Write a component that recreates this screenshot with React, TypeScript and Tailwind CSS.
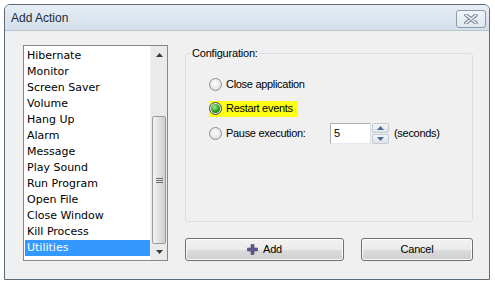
import React from 'react';

const items = [
  'Hibernate',
  'Monitor',
  'Screen Saver',
  'Volume',
  'Hang Up',
  'Alarm',
  'Message',
  'Play Sound',
  'Run Program',
  'Open File',
  'Close Window',
  'Kill Process',
  'Utilities',
];

const Radio: React.FC<{ checked?: boolean }> = ({ checked }) =>
  checked ? (
    <span className="w-[13px] h-[13px] shrink-0 rounded-full border border-[#3c4a3a] bg-[#e8e8e8] flex items-center justify-center">
      <span className="w-[9px] h-[9px] rounded-full bg-[radial-gradient(circle_at_40%_35%,#a6f08c,#2a9a1c_55%,#0d4f08)]" />
    </span>
  ) : (
    <span className="w-[13px] h-[13px] shrink-0 rounded-full border border-[#8e8f8f] bg-[radial-gradient(circle_at_45%_40%,#ffffff,#e6e6e6_60%,#c9c9c9)]" />
  );

const Button: React.FC<{ className?: string; children: React.ReactNode }> = ({ className, children }) => (
  <button
    className={`h-[23px] rounded-[3px] border border-[#707070] bg-[linear-gradient(#f2f2f2,#ebebeb_50%,#dddddd_50%,#cfcfcf)] shadow-[inset_0_0_0_1px_#fcfcfc] flex items-center justify-center text-[11px] tracking-[-0.2px] text-black ${className}`}
  >
    {children}
  </button>
);

const App: React.FC = () => {
  return (
    <div className="w-[495px] h-[285px] bg-white pl-[4px] pt-[4px] font-['Liberation_Sans',Arial,sans-serif]">
      <div className="w-[486px] h-[276px] border border-[#5d6a78] rounded-t-[6px] flex flex-col overflow-hidden">
        {/* title bar */}
        <div className="h-[25px] bg-[linear-gradient(#e6edf5,#d4dfeb)] flex items-center justify-between pl-[6px] pr-[3px]">
          <span className="text-[12px] text-[#1b2a3a]">Add Action</span>
          <div className="w-[30px] h-[18px] mt-[2px] rounded-[3px] border border-[#8d9aab] bg-[linear-gradient(#f3f6f9,#dfe6ee)] flex items-center justify-center">
            <svg width="14" height="10" viewBox="0 0 14 10">
              <path d="M2 1 L12 9 M12 1 L2 9" stroke="#7c8794" strokeWidth="3.6" strokeLinecap="round" />
              <path d="M2 1 L12 9 M12 1 L2 9" stroke="#f4f6f8" strokeWidth="1.6" strokeLinecap="round" />
            </svg>
          </div>
        </div>

        {/* body */}
        <div className="flex-1 bg-[#f0f0f0] border-t border-[#b9c4cf] flex pl-[18px] pt-[14px] gap-[17px]">
          {/* list box */}
          <div className="w-[145px] h-[216px] border border-[#828790] bg-white flex">
            <div className="flex-1 pt-[2px] pl-[1px] font-['DejaVu_Sans',sans-serif] text-[11px] text-black">
              {items.map((item) => (
                <div
                  key={item}
                  className={`h-[16px] leading-[16px] pl-[2px] ${item === 'Utilities' ? 'bg-[#3399ff] text-white' : ''}`}
                >
                  {item}
                </div>
              ))}
            </div>
            {/* scrollbar */}
            <div className="w-[17px] bg-[#eaeaea] border-l border-[#f4f4f4] flex flex-col">
              <div className="h-[17px] flex items-center justify-center">
                <svg width="7" height="4" viewBox="0 0 7 4">
                  <path d="M3.5 0 L7 4 L0 4 Z" fill="#3a3a3a" />
                </svg>
              </div>
              <div className="h-[53px]" />
              <div className="h-[128px] mx-[1px] rounded-[2px] border border-[#9a9a9a] bg-[linear-gradient(90deg,#f4f4f4,#e2e2e2_45%,#cfcfcf)] flex items-center justify-center">
                <div className="flex flex-col gap-[1px]">
                  <div className="w-[7px] h-[1px] bg-[#6e6e6e]" />
                  <div className="w-[7px] h-[1px] bg-[#6e6e6e]" />
                  <div className="w-[7px] h-[1px] bg-[#6e6e6e]" />
                </div>
              </div>
              <div className="flex-1 flex items-center justify-center">
                <svg width="7" height="4" viewBox="0 0 7 4">
                  <path d="M0 0 L7 0 L3.5 4 Z" fill="#3a3a3a" />
                </svg>
              </div>
            </div>
          </div>

          {/* right side */}
          <div className="w-[288px] flex flex-col">
            <fieldset className="h-[177px] border border-[#d5dfe5] rounded-[3px]">
              <legend className="ml-[5px] px-[1px] text-[11px] tracking-[-0.2px] leading-[16px] text-black">Configuration:</legend>
              <div className="pt-[11px] pl-[23px] flex flex-col text-[11px] tracking-[-0.3px] text-black">
                <div className="h-[24px] flex items-center gap-[4px]">
                  <Radio />
                  <span>Close application</span>
                </div>
                <div className="h-[25px] flex items-center">
                  <div className="h-[16px] flex items-center gap-[4px] bg-[#ffff14] pr-[5px]">
                    <Radio checked />
                    <span>Restart events</span>
                  </div>
                </div>
                <div className="h-[24px] flex items-center">
                  <Radio />
                  <span className="ml-[4px] w-[104px]">Pause execution:</span>
                  <div className="w-[41px] h-[21px] border border-[#abadb3] border-b-[#e3e9ef] border-r-[#dbdfe6] bg-white pl-[3px] flex items-center">
                    5
                  </div>
                  <div className="ml-[1px] w-[17px] h-[21px] flex flex-col gap-[1px]">
                    <div className="flex-1 border border-[#c4cbd4] rounded-[2px] bg-[linear-gradient(#f4f6f8,#dde3ea)] flex items-center justify-center">
                      <svg width="7" height="4" viewBox="0 0 7 4">
                        <path d="M3.5 0 L7 4 L0 4 Z" fill="#4b6a94" />
                      </svg>
                    </div>
                    <div className="flex-1 border border-[#c4cbd4] rounded-[2px] bg-[linear-gradient(#f4f6f8,#dde3ea)] flex items-center justify-center">
                      <svg width="7" height="4" viewBox="0 0 7 4">
                        <path d="M0 0 L7 0 L3.5 4 Z" fill="#4b6a94" />
                      </svg>
                    </div>
                  </div>
                  <span className="ml-[5px]">(seconds)</span>
                </div>
              </div>
            </fieldset>

            <div className="mt-[16px] flex gap-[17px]">
              <Button className="w-[159px] gap-[5px]">
                <svg width="11" height="11" viewBox="0 0 11 11">
                  <path d="M4 0.5 H7 V4 H10.5 V7 H7 V10.5 H4 V7 H0.5 V4 H4 Z" fill="#5d5a8e" stroke="#4a4676" strokeWidth="0.6" strokeLinejoin="round" />
                </svg>
                <span>Add</span>
              </Button>
              <Button className="w-[112px]">Cancel</Button>
            </div>
          </div>
        </div>
      </div>
    </div>
  );
};

export default App;
